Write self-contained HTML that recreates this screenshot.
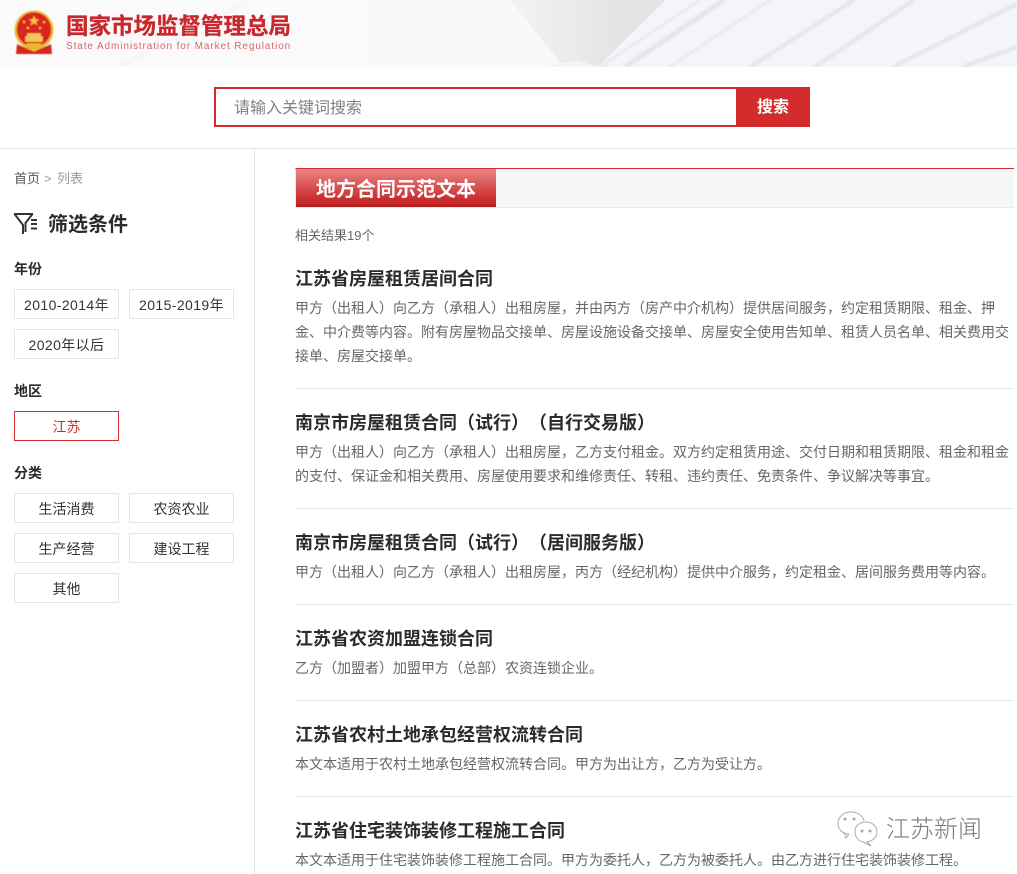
<!DOCTYPE html>
<html lang="zh-CN">
<head>
<meta charset="utf-8">
<title>地方合同示范文本</title>
<style>
html,body{margin:0;padding:0;background:#fff}
#p{position:relative;width:1017px;height:874px;overflow:hidden;background:#fff;font-family:"Liberation Sans","Noto Sans CJK SC",sans-serif;color:#333;text-spacing-trim:space-all}
#p div,#p svg{position:absolute;box-sizing:border-box}
.t{white-space:nowrap}
.chip{width:105px;height:30px;border:1px solid #e5e5e5;font-size:14px;line-height:30px;text-align:center;color:#333}
.y{letter-spacing:.4px}
.h{font-size:14px;font-weight:bold;left:14px;line-height:20px;color:#2b2b2b;white-space:nowrap}
.ti{left:295px;font-size:18px;font-weight:bold;line-height:26px;color:#2b2b2b;white-space:nowrap}
.d{left:295px;font-size:14px;line-height:24px;color:#666;white-space:nowrap}
.l{left:295px;width:719px;height:1px;background:#e5e5e5}
</style>
</head>
<body>
<div id="p">
<div style="left:0;top:0;width:1017px;height:67px;background:linear-gradient(90deg,#fafafb 0,#f9f9fb 50%,#f4f5f8 100%)"></div>
<svg style="left:0;top:0" width="1017" height="67" viewBox="0 0 1017 67">
<defs>
<linearGradient id="w" x1="0" x2="1" y1="0" y2="0"><stop offset="0" stop-color="#f3f3f5"/><stop offset=".7" stop-color="#e3e4e6"/></linearGradient>
<filter id="b"><feGaussianBlur stdDeviation="1"/></filter>
</defs>
<polygon points="510,0 666,0 598,67 564,67" fill="url(#w)"/>
<polygon points="666,0 1017,0 1017,67 545,67 575,60 600,67" fill="#f4f5f8"/>
<g stroke="#e4e5e8" fill="none" filter="url(#b)">
<path d="M724,0 L625,67" stroke-width="5"/>
<path d="M700,0 L600,67" stroke-width="2"/>
<path d="M770,0 L670,67" stroke-width="2"/>
<path d="M854,0 L750,67" stroke-width="4"/>
<path d="M914,0 L815,67" stroke-width="4"/>
<path d="M1017,4 L893,67" stroke-width="4"/>
<path d="M1017,47 L962,67" stroke-width="4"/>
</g>
<path d="M250,0 L117,67" stroke="#f4f4f6" stroke-width="3" fill="none" filter="url(#b)"/>
</svg>
<svg style="left:14px;top:10px;filter:blur(.4px)" width="40" height="45" viewBox="0 0 40 45">
<circle cx="20" cy="20" r="19.5" fill="#efb62f"/>
<circle cx="20" cy="19.5" r="17" fill="#d8261f"/>
<path d="M20,5 l1.7,4 4,.3 -3.2,2.5 1.2,4 -3.7,-2.3 -3.7,2.3 1.2,-4 -3.2,-2.5 4,-.3z" fill="#f4c13d"/>
<circle cx="10" cy="12" r="1.4" fill="#f4c13d"/><circle cx="30" cy="12" r="1.4" fill="#f4c13d"/><circle cx="14" cy="18" r="1.4" fill="#f4c13d"/><circle cx="26" cy="18" r="1.4" fill="#f4c13d"/>
<path d="M13,23 h14 v3 h2 v6 H11 v-6 h2z" fill="#f2c75a"/>
<path d="M3,34 Q20,44 37,34 L38,44 H2z" fill="#d8261f"/>
<path d="M13,33 h14 l2,5 -9,4 -9,-4z" fill="#eeb52f"/>
</svg>
<div class="t" style="left:66px;top:13px;font-size:22.5px;line-height:28px;font-weight:bold;color:#c8282c;-webkit-text-stroke:.3px #c8282c;filter:blur(.3px)">国家市场监督管理总局</div>
<div class="t" style="left:66px;top:41px;font-size:10px;line-height:12px;color:#d9656a;letter-spacing:.9px">State Administration for Market Regulation</div>

<div style="left:214px;top:87px;width:524px;height:40px;border:2px solid #d42c2c;background:#fff"></div>
<div class="t" style="left:234px;top:97px;font-size:16px;line-height:23px;color:#808080">请输入关键词搜索</div>
<div style="left:736px;top:87px;width:74px;height:40px;background:#d42c2c"></div>
<div class="t" style="left:757px;top:96px;font-size:16px;line-height:23px;font-weight:bold;color:#fff">搜索</div>

<div style="left:0;top:148px;width:1017px;height:1px;background:#e5e5e5"></div>
<div style="left:254px;top:148px;width:1px;height:726px;background:#e5e5e5"></div>

<div class="t" style="left:14px;top:170px;font-size:13px;line-height:18px;color:#555">首页</div>
<div class="t" style="left:44px;top:170px;font-size:13px;line-height:18px;color:#999">&gt;</div>
<div class="t" style="left:57px;top:170px;font-size:13px;line-height:18px;color:#999">列表</div>
<svg style="left:13px;top:212px" width="25" height="24" viewBox="0 0 25 24" fill="none" stroke="#333" stroke-width="2">
<path d="M1,2 H20 M1.500,2 L10,13 V22 M19.500,2 L12.500,11 V20"/>
<path d="M18,8 H24 M18,12 H24 M18,16.500 H24" stroke-width="2"/>
</svg>
<div class="t" style="left:48px;top:211px;font-size:20px;line-height:28px;font-weight:bold;color:#2b2b2b">筛选条件</div>

<div class="h" style="top:259px">年份</div>
<div class="chip y" style="left:14px;top:289px">2010-2014年</div>
<div class="chip y" style="left:129px;top:289px">2015-2019年</div>
<div class="chip y" style="left:14px;top:329px">2020年以后</div>
<div class="h" style="top:381px">地区</div>
<div class="chip" style="left:14px;top:411px;border-color:#d42c2c;color:#d42c2c">江苏</div>
<div class="h" style="top:463px">分类</div>
<div class="chip" style="left:14px;top:493px">生活消费</div>
<div class="chip" style="left:129px;top:493px">农资农业</div>
<div class="chip" style="left:14px;top:533px">生产经营</div>
<div class="chip" style="left:129px;top:533px">建设工程</div>
<div class="chip" style="left:14px;top:573px">其他</div>

<div style="left:295px;top:168px;width:719px;height:40px;background:#f6f6f6;border-top:1px solid #d42c2c;border-bottom:1px solid #e8e8e8;border-left:1px solid #e8e8e8"></div>
<div style="left:296px;top:169px;width:200px;height:38px;background:linear-gradient(#e98585,#c92a2a 90%);border-bottom:3px solid #b51f1f"></div>
<div class="t" style="left:316px;top:176px;font-size:20px;line-height:28px;font-weight:bold;color:#fff">地方合同示范文本</div>

<div class="t" style="left:295px;top:227px;font-size:13px;line-height:18px;color:#666">相关结果19个</div>

<div class="ti" style="top:266px">江苏省房屋租赁居间合同</div>
<div class="d" style="top:296px">甲方（出租人）向乙方（承租人）出租房屋，并由丙方（房产中介机构）提供居间服务，约定租赁期限、租金、押</div>
<div class="d" style="top:320px">金、中介费等内容。附有房屋物品交接单、房屋设施设备交接单、房屋安全使用告知单、租赁人员名单、相关费用交</div>
<div class="d" style="top:344px">接单、房屋交接单。</div>
<div class="l" style="top:388px"></div>

<div class="ti" style="top:410px">南京市房屋租赁合同（试行）（自行交易版）</div>
<div class="d" style="top:440px">甲方（出租人）向乙方（承租人）出租房屋，乙方支付租金。双方约定租赁用途、交付日期和租赁期限、租金和租金</div>
<div class="d" style="top:464px">的支付、保证金和相关费用、房屋使用要求和维修责任、转租、违约责任、免责条件、争议解决等事宜。</div>
<div class="l" style="top:508px"></div>

<div class="ti" style="top:530px">南京市房屋租赁合同（试行）（居间服务版）</div>
<div class="d" style="top:560px">甲方（出租人）向乙方（承租人）出租房屋，丙方（经纪机构）提供中介服务，约定租金、居间服务费用等内容。</div>
<div class="l" style="top:604px"></div>

<div class="ti" style="top:626px">江苏省农资加盟连锁合同</div>
<div class="d" style="top:656px">乙方（加盟者）加盟甲方（总部）农资连锁企业。</div>
<div class="l" style="top:700px"></div>

<div class="ti" style="top:722px">江苏省农村土地承包经营权流转合同</div>
<div class="d" style="top:752px">本文本适用于农村土地承包经营权流转合同。甲方为出让方，乙方为受让方。</div>
<div class="l" style="top:796px"></div>

<div class="ti" style="top:818px">江苏省住宅装饰装修工程施工合同</div>
<div class="d" style="top:848px">本文本适用于住宅装饰装修工程施工合同。甲方为委托人，乙方为被委托人。由乙方进行住宅装饰装修工程。</div>

<svg style="left:836px;top:810px" width="44" height="38" viewBox="0 0 44 38" fill="none" stroke="#aaa" stroke-width="1">
<path d="M13,24 C5,24 2,18 2,13 C2,6 9,2 15,2 C22,2 27,6 28,11"/>
<path d="M13,24 L10,28 L8,22"/>
<path d="M19,21 C19,15 25,12 30,12 C36,12 41,16 41,22 C41,27 37,31 31,32 L35,36 L27,32 C22,31 19,27 19,21Z" fill="#fff"/>
<circle cx="9" cy="9" r="1" fill="#999"/><circle cx="18" cy="9" r="1" fill="#999"/><circle cx="26" cy="21" r="1" fill="#999"/><circle cx="34" cy="21" r="1" fill="#999"/>
</svg>
<div class="t" style="left:886px;top:813px;font-size:24px;line-height:34px;color:#777;font-weight:300">江苏新闻</div>
</div>
</body>
</html>
